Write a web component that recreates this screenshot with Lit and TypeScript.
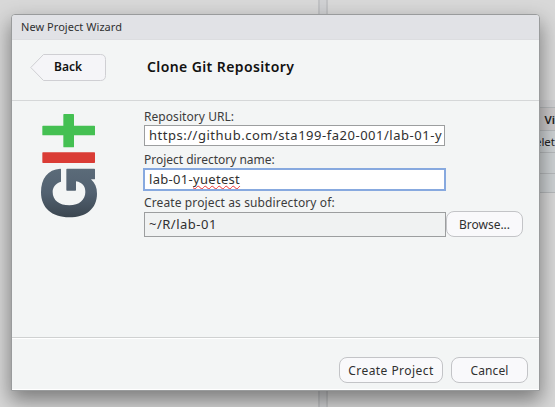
import { LitElement, html, css } from "lit";
import { customElement } from "lit/decorators.js";

@customElement("git-logo")
class GitLogo extends LitElement {
  static styles = css`
    :host { display: block; width: 58px; height: 105.33px; }
    svg { display: block; width: 100%; height: 100%; }
  `;
  render() {
    return html`<svg viewBox="60 38 174 316" aria-label="Git">
      <defs>
        <linearGradient id="g" x1="0" y1="0" x2="0" y2="1">
          <stop offset="0" stop-color="#5b6b79" />
          <stop offset="0.5" stop-color="#526170" />
          <stop offset="1" stop-color="#3b4650" />
        </linearGradient>
      </defs>
      <path fill="#44c052" d="M132 41h28q2 0 2 2v33h61q2 0 2 2v25q0 2-2 2h-61v34q0 2-2 2h-28q-2 0-2-2v-34H69q-2 0-2-2V78q0-2 2-2h61V43q0-2 2-2z" />
      <rect x="67" y="156" width="158" height="32" rx="2" fill="#da3c35" />
      <path fill="url(#g)" d="M121 205q2 0 2 2v37C105 250 98 262 98 275C98 300 118 315 148 315C178 315 196 298 196 275C196 258 188 247 168 243V269q0 2-2 2h-25q-2 0-2-2V207q0-2 2-2h82q2 0 2 2v28q0 2-2 2h-10C225 248 231 262 231 280C231 325 198 351 148 351C95 351 63 322 63 276C63 235 83 207 121 205z" />
    </svg>`;
  }
}

@customElement("app-root")
class AppRoot extends LitElement {
  static styles = css`
    :host { display: block; position: relative; width: 555px; height: 407px; overflow: hidden;
      font-family: "Noto Sans", "Open Sans", sans-serif; color: #303030; background: #d8d8d8; }
    * { box-sizing: border-box; }
    .backdrop { display: grid; grid-template-columns: 318px 10px 1fr; height: 407px; }
    .splitter { background: #d0d1d3; border-left: 2px solid #c2c3c5; border-right: 2px solid #c2c3c5; }
    .pane { padding-top: 100px; display: flex; flex-direction: column; }
    .row { height: 21px; border-bottom: 1px solid #b6b9bb; background: #cdd1d3; display: flex;
      align-items: center; justify-content: flex-end; font-size: 11.5px; color: #222; white-space: nowrap; overflow: hidden; }
    .row.top { height: 8px; background: #d0d0d2; }
    .row.tabs { height: 23px; background: #ccc9ca; font-weight: 600; }
    .row.tools { height: 22px; }
    .row.last { height: 19px; }
    .dialog { position: absolute; left: 11px; top: 14px; width: 529px; height: 377px;
      display: flex; flex-direction: column; background: #f3f5f5; border: 1px solid #999b9c;
      border-radius: 4px 4px 0 0; box-shadow: 0 9px 20px 1px rgba(0,0,0,.42); }
    .caption { height: 25px; padding-left: 9px; font-size: 11px; letter-spacing: .05px; line-height: 24px; background: #e1e2e6;
      border-bottom: 1px solid #dcdde0; border-radius: 3px 3px 0 0; }
    .head { height: 61px; display: flex; align-items: center; border-bottom: 1px solid #d5d7d8; padding: 0 0 6px 18px; }
    .back { position: relative; width: 76px; height: 27px; }
    .back svg { display: block; }
    .back span { position: absolute; left: 24px; top: 0; line-height: 26px; font-weight: 600; font-size: 12px; color: #111; }
    .title { margin-left: 41px; margin-top: -2px; font-weight: 600; font-size: 14px; letter-spacing: .4px; color: #111; white-space: nowrap; }
    .body { flex: 1; display: flex; align-items: flex-start; padding: 11.67px 0 0 28px; border-bottom: 1px solid #cfd1d1; }
    .form { margin-left: 46px; margin-top: -4.67px; font-size: 12px; color: #3c3c3c; white-space: nowrap; }
    .label { height: 17px; line-height: 17px; }
    .l1 { letter-spacing: .06px; }
    .l2 { letter-spacing: -.02px; }
    .l3 { letter-spacing: .12px; }
    .field { width: 301px; background: #fff; border: 1px solid #9c9e9f; color: #303030; padding-left: 4px; overflow: hidden; font-size: 13px; letter-spacing: .3px; }
    .url { height: 21px; line-height: 19px; margin-bottom: 5px; letter-spacing: .52px; }
    .url .clip { display: block; width: 294px; overflow: hidden; }
    .name { width: 303px; height: 23px; line-height: 19px; border: 2px solid #87a9df; margin: 0 0 3px -1px; }
    .wavy { text-decoration: underline wavy #e33 1px; text-underline-offset: 1px; text-decoration-skip-ink: none; }
    .line { display: flex; align-items: flex-end; }
    .dir { width: 302px; height: 25px; line-height: 23px; background: #f0f2f2; letter-spacing: .5px; }
    .btn { height: 26px; border: 1px solid #c3c4c7; border-radius: 8px; background: #f9f9fb; color: #303030;
      font: 12px "Noto Sans", sans-serif; padding: 0; text-align: center; white-space: nowrap; }
    .browse { width: 77px; }
    .foot { height: 52px; border-top: 1px solid #fff; border-bottom: 1px solid #fff; display: flex;
      justify-content: flex-end; align-items: flex-start; padding: 18px 11px 0 0; gap: 8px; }
    .create { width: 104px; letter-spacing: .45px; }
    .cancel { width: 77px; letter-spacing: .1px; }
  `;
  render() {
    return html`
      <div class="backdrop">
        <div></div>
        <div class="splitter"></div>
        <div class="pane">
          <div class="row top"></div>
          <div class="row tabs">Vi</div>
          <div class="row tools">elet</div>
          <div class="row"></div>
          <div class="row last"></div>
        </div>
      </div>
      <div class="dialog">
        <div class="caption">New Project Wizard</div>
        <div class="head">
          <div class="back">
            <svg width="76" height="27" viewBox="0 0 76 27">
              <path d="M13.5 .5H70.5Q75.5 .5 75.5 5.5V21.5Q75.5 26.5 70.5 26.5H13.5L.8 13.5Z" fill="#f5f5f8" stroke="#cfcfd3" />
            </svg>
            <span>Back</span>
          </div>
          <div class="title">Clone Git Repository</div>
        </div>
        <div class="body">
          <git-logo></git-logo>
          <div class="form">
            <div class="label l1">Repository URL:</div>
            <div class="field url"><span class="clip">https://github.com/sta199-fa20-001/lab-01-y</span></div>
            <div class="label l2">Project directory name:</div>
            <div class="field name">lab-01-<span class="wavy">yuetest</span></div>
            <div class="label l3">Create project as subdirectory of:</div>
            <div class="line">
              <div class="field dir">~/R/lab-01</div>
              <button class="btn browse">Browse...</button>
            </div>
          </div>
        </div>
        <div class="foot">
          <button class="btn create">Create Project</button>
          <button class="btn cancel">Cancel</button>
        </div>
      </div>
    `;
  }
}
